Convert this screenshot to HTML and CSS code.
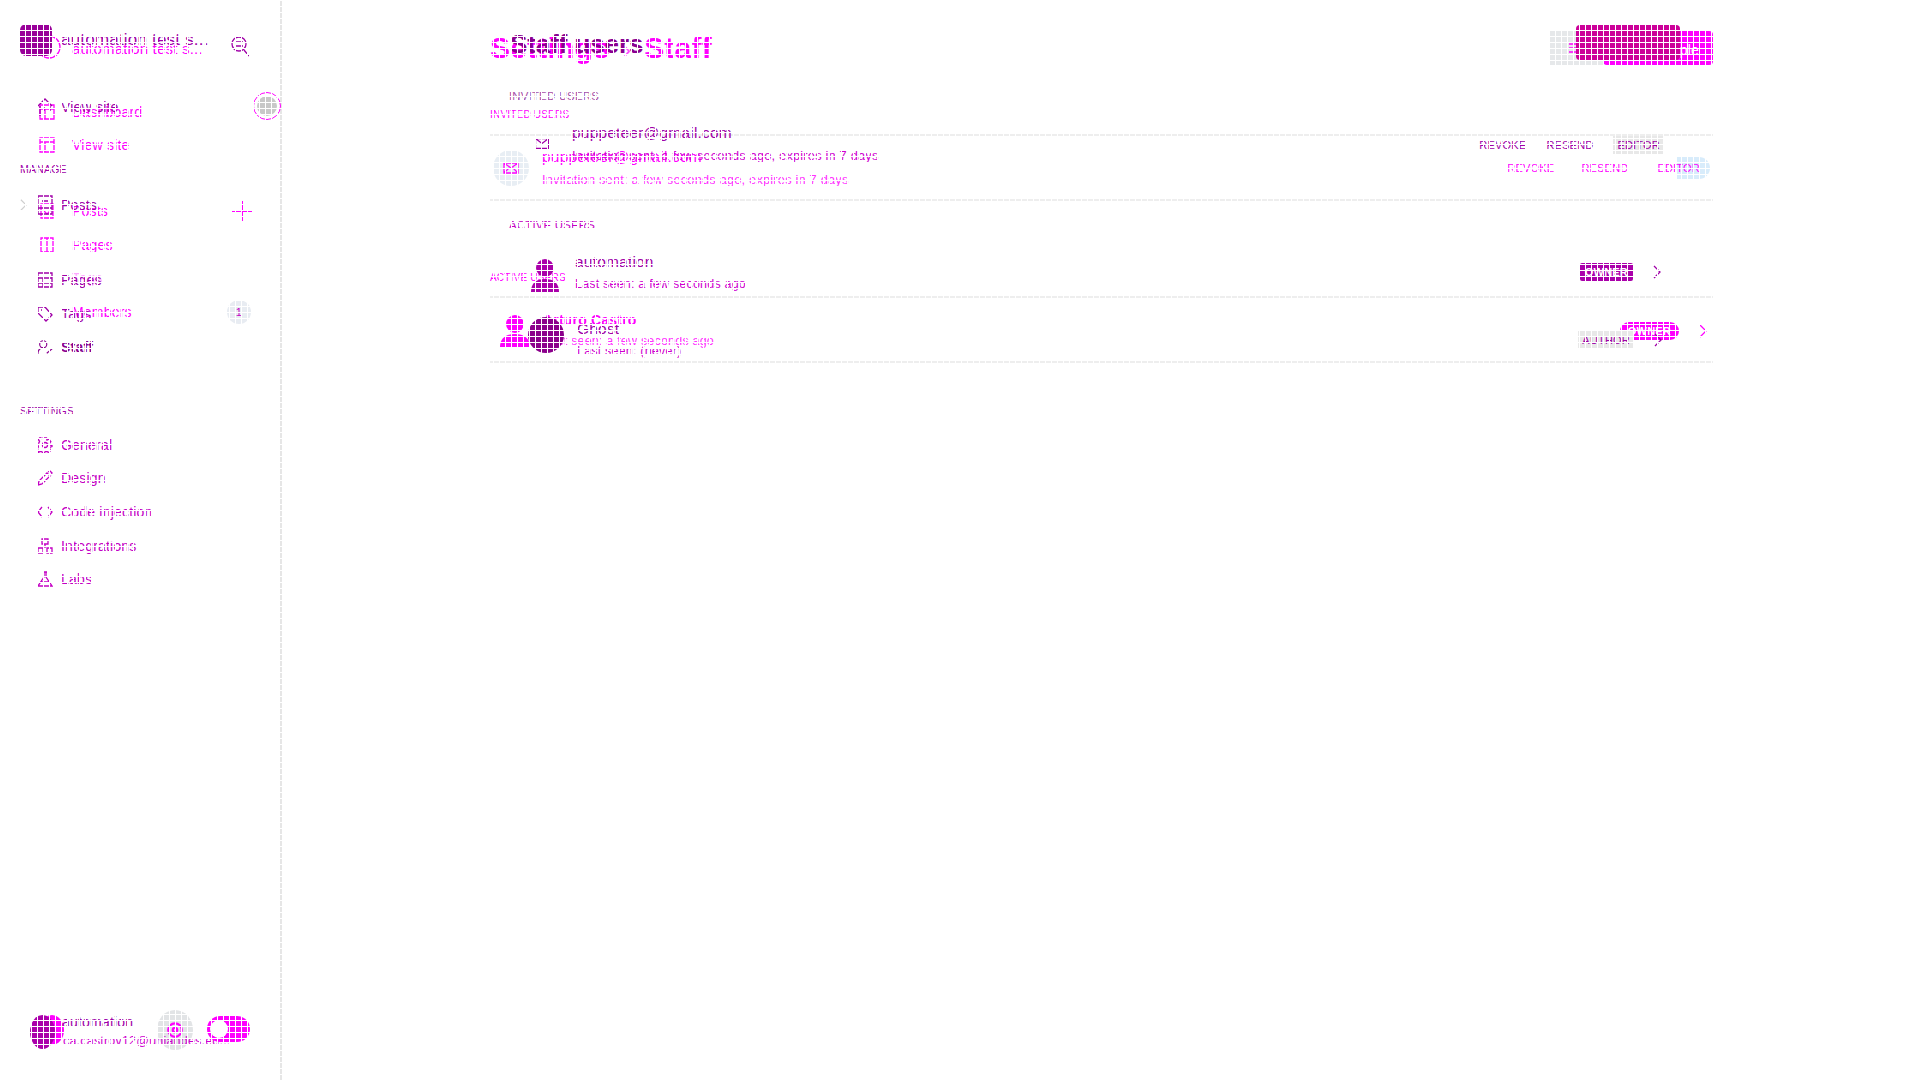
FILE: index.html
```html
<!DOCTYPE html>
<html lang="en">
<head>
<meta charset="UTF-8">
<title>Staff</title>
<link rel="stylesheet" href="styles.css">
</head>
<body>

<!-- lower copy of the page: the bright one -->
<div class="layer layer-new">
  <aside class="side">
    <div class="brand">
      <svg class="brand-ring" viewBox="0 0 24 28"><circle cx="12" cy="13" r="11"/></svg>
      <span class="brand-name">automation test s...</span>
    </div>
    <nav class="menu">
      <a class="item"><svg class="ico" viewBox="0 0 16 16"><path d="M1 1h14v14H1zM1 5h14M6 5v10"/></svg>Dashboard</a>
      <a class="item"><svg class="ico" viewBox="0 0 16 16"><path d="M1 1h14v14H1zM1 5h14M6 5v10"/></svg>View site</a>
      <div class="item-gap"></div>
      <a class="item"><svg class="ico" viewBox="0 0 16 16"><path d="M2 1h12v14H2zM5 8l3 3 3-3"/></svg>Posts<svg class="plus" viewBox="0 0 20 20"><path d="M0 10h20M10 0v20"/></svg></a>
      <a class="item"><svg class="ico" viewBox="0 0 16 16"><path d="M2 1h12v14H2zM8 1v14"/></svg>Pages</a>
      <a class="item item-bare item-faint">Tags</a>
      <a class="item item-bare">Members<span class="count">1</span></a>
    </nav>
    <div class="acct">
      <span class="acct-pic"></span>
      <span class="acct-gear"><svg viewBox="0 0 16 16"><circle cx="8" cy="8" r="6"/><circle cx="8" cy="8" r="2"/></svg></span>
      <span class="acct-email">ca.castrov12@uniandes.ed...</span>
      <span class="acct-toggle"><i></i></span>
    </div>
  </aside>
  <main class="view">
    <header class="head">
      <h1 class="title">Settings<span class="crumb">›</span>Staff</h1>
      <div class="btns"><span class="btn-grey"><svg viewBox="0 0 16 12"><path d="M1 2h14M1 6h14M1 10h14"/></svg></span><span class="btn-main">Invite people</span></div>
    </header>
    <h3 class="caps caps-invited">Invited users</h3>
    <div class="row row-invited">
      <span class="round"><svg viewBox="0 0 16 12"><path d="M1 1h14v10H1zM1 1l7 5 7-5M1 11l5-5M15 11l-5-5"/></svg></span>
      <div class="who">
        <div class="who-name">puppeteer@gmail.com</div>
        <div class="who-sub">Invitation sent: a few seconds ago, expires in 7 days</div>
      </div>
      <div class="acts">
        <span class="act">REVOKE</span><span class="act">RESEND</span><span class="act act-role">EDITOR</span>
      </div>
    </div>
    <h3 class="caps caps-active">Active users</h3>
    <div class="row row-owner">
      <svg class="pic" viewBox="0 0 30 34"><circle cx="15" cy="10" r="9"/><path d="M0 33c0-9 6-13 15-13s15 4 15 13z"/></svg>
      <div class="who">
        <div class="who-name">Arturo Castro</div>
        <div class="who-sub who-seen">Last seen: a few seconds ago</div>
      </div>
      <span class="badge">OWNER</span>
      <svg class="chev" viewBox="0 0 8 14"><path d="M1 1l6 6-6 6"/></svg>
    </div>
  </main>
</div>

<!-- upper copy of the page: the dark one -->
<div class="layer layer-old">
  <aside class="side">
    <div class="brand">
      <span class="logo"></span>
      <span class="brand-name">automation test s...</span>
      <svg class="find" viewBox="0 0 18 22"><circle cx="8" cy="9" r="7"/><path d="M4 7h8M4 11h8M13 15l5 6"/></svg>
    </div>
    <nav class="menu">
      <a class="item"><svg class="ico ico-tall" viewBox="0 0 16 20"><path d="M1 9l7-7 7 7M3 9v10M13 9v5M7 10v4"/></svg>View site<span class="globe"></span></a>
      <div class="label">Manage</div>
      <a class="item"><svg class="mark" viewBox="0 0 8 14"><path d="M1 1l6 6-6 6"/></svg><svg class="ico ico-tall" viewBox="0 0 16 20"><path d="M1 1h14v18H1zM5 6h6M1 13h14"/></svg>Posts</a>
      <div class="item-gap"></div>
      <a class="item"><svg class="ico" viewBox="0 0 16 16"><path d="M1 1h14v14H1zM1 6h14M1 11h14M6 6v9"/></svg>Pages</a>
      <a class="item"><svg class="ico" viewBox="0 0 16 16"><path d="M1 1h7l7 8-6 6-8-8zM4 4h1"/></svg>Tags</a>
      <a class="item item-strong"><svg class="ico" viewBox="0 0 18 18"><circle cx="7" cy="6" r="4"/><path d="M1 17c0-5 3-7 6-7M11 16l6-5"/></svg>Staff</a>
      <div class="label label-settings">Settings</div>
      <a class="item item-set"><svg class="ico" viewBox="0 0 16 16"><circle cx="8" cy="8" r="2.5"/><path d="M6.500 1h3l.5 2 2-.8 1.800 2.400-1.400 1.600.6 1.800 2 .5v1l-2 .7-.4 1.700 1 1.800-2.200 1.800-1.600-1.200-1.800.4-.5 1.300h-2l-.5-1.300-1.800-.4-1.600 1.200L.4 11.700l1-1.800L1 8.200l-1-.7v-1l2-.5.6-1.800L1.200 2.600 3 .6l2 1z"/></svg>General</a>
      <a class="item item-set"><svg class="ico" viewBox="0 0 16 16"><path d="M1 15l1-4 8-8 3 3-8 8zM11 2l2-1 2 2-1 2"/></svg>Design</a>
      <a class="item item-set"><svg class="ico" viewBox="0 0 16 16"><path d="M5 3L1 8l4 5M11 3l4 5-4 5"/></svg>Code injection</a>
      <a class="item item-set"><svg class="ico" viewBox="0 0 16 16"><path d="M5 1h6v5H5zM1 10h5v5H1zM10 10h5v5h-5zM8 6v4"/></svg>Integrations</a>
      <a class="item item-set"><svg class="ico" viewBox="0 0 16 16"><path d="M6 1h4M7 1v5l-6 9h14L9 6V1M4 11h8"/></svg>Labs</a>
    </nav>
    <div class="acct">
      <span class="acct-pic"></span>
      <span class="acct-name">automation</span>
    </div>
  </aside>
  <main class="view">
    <header class="head">
      <h1 class="title">Staff users</h1>
      <div class="btns"><span class="btn-main"></span></div>
    </header>
    <h3 class="caps caps-invited">Invited users</h3>
    <div class="row row-invited">
      <svg class="env" viewBox="0 0 14 11"><path d="M.5.5h13v10H.5zM.5.5l6.500 5 6.500-5"/></svg>
      <div class="who">
        <div class="who-name">puppeteer@gmail.com</div>
        <div class="who-sub">Invitation sent: a few seconds ago, expires in 7 days</div>
      </div>
      <div class="acts">
        <span class="act">REVOKE</span><span class="act">RESEND</span><span class="act act-role">EDITOR</span>
      </div>
    </div>
    <h3 class="caps caps-active">Active users</h3>
    <div class="row row-owner">
      <svg class="pic" viewBox="0 0 30 34"><circle cx="15" cy="9" r="9"/><path d="M1 33c0-9 5-13 14-13s14 4 14 13z"/></svg>
      <div class="who">
        <div class="who-name">automation</div>
        <div class="who-sub who-seen">Last seen: a few seconds ago</div>
      </div>
      <span class="badge">OWNER</span>
      <svg class="chev" viewBox="0 0 8 14"><path d="M1 1l6 6-6 6"/></svg>
    </div>
    <div class="row row-ghost">
      <span class="disc"></span>
      <div class="who">
        <div class="who-name">Ghost</div>
        <div class="who-sub who-seen">Last seen: (never)</div>
      </div>
      <span class="role-tag">AUTHOR</span>
      <svg class="chev" viewBox="0 0 8 14"><path d="M1 1l6 6-6 6"/></svg>
    </div>
  </main>
</div>

<!-- the white 6px lattice over everything -->
<div class="lattice"></div>

</body>
</html>
```

FILE: styles.css
```css
html, body {
  margin: 0;
  height: 100%;
  background: #fff;
}
body {
  font-family: "Liberation Sans", Arial, sans-serif;
  overflow: hidden;
}
svg {
  fill: none;
  stroke: currentColor;
  stroke-width: 1.3;
  display: block;
}
h1, h3 {
  margin: 0;
}

.layer {
  position: absolute;
  inset: 0;
  display: flex;
  font-size: 14px;
  letter-spacing: .2px;
}
.layer-new {
  color: #ff00ff;
}
.layer-old {
  color: #a000a8;
}
.lattice {
  position: absolute;
  inset: 0;
  pointer-events: none;
  background-image:
    repeating-linear-gradient(90deg, #fff 0 1px, transparent 1px 6px),
    repeating-linear-gradient(0deg, #fff 0 1px, transparent 1px 6px);
  background-position: 1px 1px;
}

/* sidebar */
.side {
  width: 280px;
  flex: none;
  display: flex;
  flex-direction: column;
  box-sizing: border-box;
  height: 100%;
}
.layer-old .side {
  border-right: 2px solid #e6e6e6;
  width: 282px;
}
.brand {
  display: flex;
  align-items: center;
  height: 40px;
}
.layer-old .brand {
  padding: 20px 0 0 20px;
}
.layer-new .brand {
  padding: 28px 0 2px 37px;
}
.logo {
  width: 32px;
  height: 32px;
  border-radius: 6px;
  background: #990099;
  margin-right: 9px;
}
.brand-ring {
  width: 24px;
  height: 28px;
  margin-right: 11px;
}
.brand-name {
  font-size: 15px;
}
.layer-old .brand-name {
  font-size: 17px;
}
.find {
  width: 18px;
  height: 22px;
  margin: 12px 0 0 22px;
}

.menu {
  display: flex;
  flex-direction: column;
}
.layer-old .menu {
  margin-top: 30px;
  padding-left: 37px;
}
.layer-new .menu {
  margin-top: 25px;
  padding-left: 39px;
}
.item {
  display: flex;
  align-items: center;
  height: 33.600px;
  position: relative;
}
.layer-new .item {
  padding-right: 28px;
}
.layer-old .ico {
  margin-right: 8px;
}
.layer-new .ico {
  margin-right: 17px;
}
.ico {
  width: 16px;
  height: 16px;
  flex: none;
}
.ico-tall {
  height: 20px;
}
.item-gap {
  height: 41px;
}
.layer-new .item-gap {
  height: 32px;
}
.item-bare {
  padding-left: 33px;
}
.item-faint {
  opacity: .35;
}
.item-strong {
  color: #8a0090;
  font-weight: bold;
}
.item-set {
  color: #c400c4;
}
.label {
  font-size: 10.500px;
  margin: 38px 0 13px -17px;
  height: 14px;
  line-height: 14px;
  text-transform: uppercase;
  color: #a000a8;
}
.label-settings {
  margin-top: 40px;
  margin-bottom: 10px;
}
.mark {
  position: absolute;
  left: -17px;
  width: 7px;
  height: 14px;
  color: #cfcfcf;
}
.globe {
  position: absolute;
  left: 216px;
  top: 2px;
  width: 28px;
  height: 28px;
  border: 1.500px solid #ff00ff;
  border-radius: 50%;
  background: #c8c8c8;
  background-clip: content-box;
  padding: 3px;
  box-sizing: border-box;
}
.plus {
  position: absolute;
  left: 193px;
  width: 20px;
  height: 20px;
  stroke-width: 2;
}
.count {
  position: absolute;
  left: 188px;
  width: 24px;
  height: 24px;
  line-height: 24px;
  border-radius: 50%;
  background: #e8ecf2;
  text-align: center;
  font-size: 11px;
  color: #c400c4;
}

.acct {
  margin-top: auto;
  display: flex;
  align-items: center;
  position: relative;
  height: 68px;
}
.acct-pic {
  position: absolute;
  left: 30px;
  top: 3px;
  width: 25px;
  height: 34px;
  border-radius: 50%;
  background: #aa00aa;
}
.layer-new .acct-pic {
  left: 40px;
  top: 3px;
  width: 24px;
  height: 30px;
  background: #ff00ff;
}
.acct-name {
  position: absolute;
  left: 62px;
  top: 2px;
}
.acct-email {
  position: absolute;
  left: 63px;
  top: 22px;
  font-size: 12.500px;
  color: #d000d0;
}
.acct-gear {
  position: absolute;
  left: 157px;
  top: -2px;
  width: 36px;
  height: 40px;
  border-radius: 50%;
  background: #e2e4e6;
  display: flex;
  align-items: center;
  justify-content: center;
}
.acct-gear svg {
  width: 18px;
  height: 18px;
  stroke-width: 2;
}
.acct-toggle {
  position: absolute;
  left: 207px;
  top: 4px;
  width: 43px;
  height: 26px;
  border-radius: 13px;
  background: #ff00ff;
}
.acct-toggle i {
  position: absolute;
  left: 3px;
  top: 4px;
  width: 18px;
  height: 18px;
  border-radius: 50%;
  background: #fff;
}

/* main column */
.view {
  flex: 1;
  display: flex;
  flex-direction: column;
  box-sizing: border-box;
  height: 100%;
}
.layer-new .view {
  padding: 0 207px 0 210px;
}
.layer-old .view {
  padding: 0 207px 0 208px;
}
.head {
  display: flex;
  align-items: center;
  justify-content: space-between;
  height: 60px;
}
.layer-new .head {
  margin-top: 31px;
  height: 34px;
}
.layer-old .head {
  padding-left: 20px;
  margin-top: 25px;
  height: 35px;
}
.title {
  font-size: 30px;
  font-weight: bold;
}
.layer-old .title {
  color: #8a0090;
  font-size: 26px;
  letter-spacing: -.1px;
  margin-top: 4px;
}
.crumb {
  margin: 0 13px;
  font-weight: normal;
  font-size: 24px;
  opacity: .7;
}
.btns {
  display: flex;
  height: 100%;
}
.btn-main {
  display: block;
  height: 100%;
  border-radius: 4px;
  background: #ff00ff;
  color: #fff;
  font-size: 14px;
  line-height: 38px;
  width: 110px;
  text-align: center;
}
.layer-old .btn-main {
  width: 104px;
  margin-right: 33px;
  background: #cc0099;
}
.btn-grey {
  width: 54px;
  background: #e6e8ea;
  display: flex;
  align-items: center;
  justify-content: center;
}
.btn-grey svg {
  width: 16px;
  height: 12px;
}
.caps {
  font-weight: normal;
  text-transform: uppercase;
  line-height: 14px;
}
.layer-new .caps {
  font-size: 10px;
}
.layer-old .caps {
  font-size: 11.400px;
  padding-left: 19px;
}
.layer-new .caps-invited {
  margin-top: 43px;
}
.layer-old .caps-invited {
  margin-top: 29px;
  color: #a850a8;
}
.layer-new .caps-active {
  margin-top: 70px;
}
.layer-old .caps-active {
  margin-top: 84px;
  color: #c400c4;
}

.row {
  display: flex;
  align-items: center;
  border-bottom: 2px solid #eeeeee;
  box-sizing: border-box;
  position: relative;
}
.layer-new .row-invited {
  margin-top: 12px;
  height: 67px;
  padding: 0 3px;
  border-top: 2px solid #eeeeee;
}
.layer-old .row-invited {
  margin-top: 30px;
  height: 1px;
  border-bottom: 0;
  padding: 0 49px 0 45px;
}
.layer-new .row-owner {
  margin-top: 20px;
  height: 58px;
  padding: 0 6px 4px 10px;
}
.layer-old .row-owner {
  height: 66px;
  padding: 0 52px 0 40px;
}
.layer-old .row-ghost {
  height: 65px;
  padding: 0 51px 0 38px;
}
.round {
  width: 36px;
  height: 36px;
  border-radius: 50%;
  background: #e8eef4;
  display: flex;
  align-items: center;
  justify-content: center;
  margin-right: 13px;
}
.round svg {
  width: 16px;
  height: 12px;
}
.env {
  width: 14px;
  height: 11px;
  position: absolute;
  left: 45px;
  top: 5px;
}
.layer-old .row-invited .who {
  margin-left: 37px;
  margin-top: 20px;
}
.who-name {
  font-size: 15.500px;
}
.who-sub {
  font-size: 12.800px;
  margin-top: 6px;
  color: #d000d0;
}
.who-seen {
  font-size: 12.500px;
}
.layer-new .who-sub {
  color: #ff33ff;
}
.layer-new .row-owner .who-name {
  font-size: 14px;
  font-weight: bold;
  margin-top: -2px;
}
.layer-old .row-owner {
  padding-top: 16px;
}
.layer-old .row-owner .who {
  margin-left: 15px;
}
.layer-old .row-owner .pic {
  margin-top: 8px;
  color: #aa00aa;
}
.layer-old .row-ghost .who {
  margin-left: 13px;
  padding-top: 18px;
}
.layer-new .row-owner .who {
  margin-left: 13px;
}
.acts {
  margin-left: auto;
  display: flex;
  font-size: 11px;
  align-items: center;
}
.layer-old .acts {
  gap: 20px;
  margin-top: 22px;
}
.layer-new .acts {
  gap: 27px;
}
.act-role {
  background: #e8e8e8;
  padding: 3px 4px;
}
.layer-new .act-role {
  background: linear-gradient(90deg, #fff 40%, #d8ecfb 40%);
  border-radius: 12px;
  padding: 5px 10px 5px 2px;
}
.pic {
  width: 30px;
  height: 34px;
  fill: currentColor;
  stroke: none;
}
.disc {
  width: 36px;
  height: 36px;
  border-radius: 50%;
  background: #8b008b;
  margin-top: 10px;
}
.badge {
  margin-left: auto;
  background: #ff00ff;
  color: #fff;
  font-size: 11px;
  font-weight: bold;
  padding: 3px 8px;
  border-radius: 10px;
}
.layer-old .badge {
  background: #aa00aa;
  border-radius: 2px;
  padding: 3px 5px;
}
.role-tag {
  margin-left: auto;
  background: #e8e8e8;
  font-size: 11px;
  padding: 3px 4px;
  color: #a000a8;
  transform: translateY(10px);
}
.chev {
  width: 8px;
  height: 14px;
  margin-left: 20px;
}
.row-ghost .chev {
  transform: translateY(10px);
}
```
